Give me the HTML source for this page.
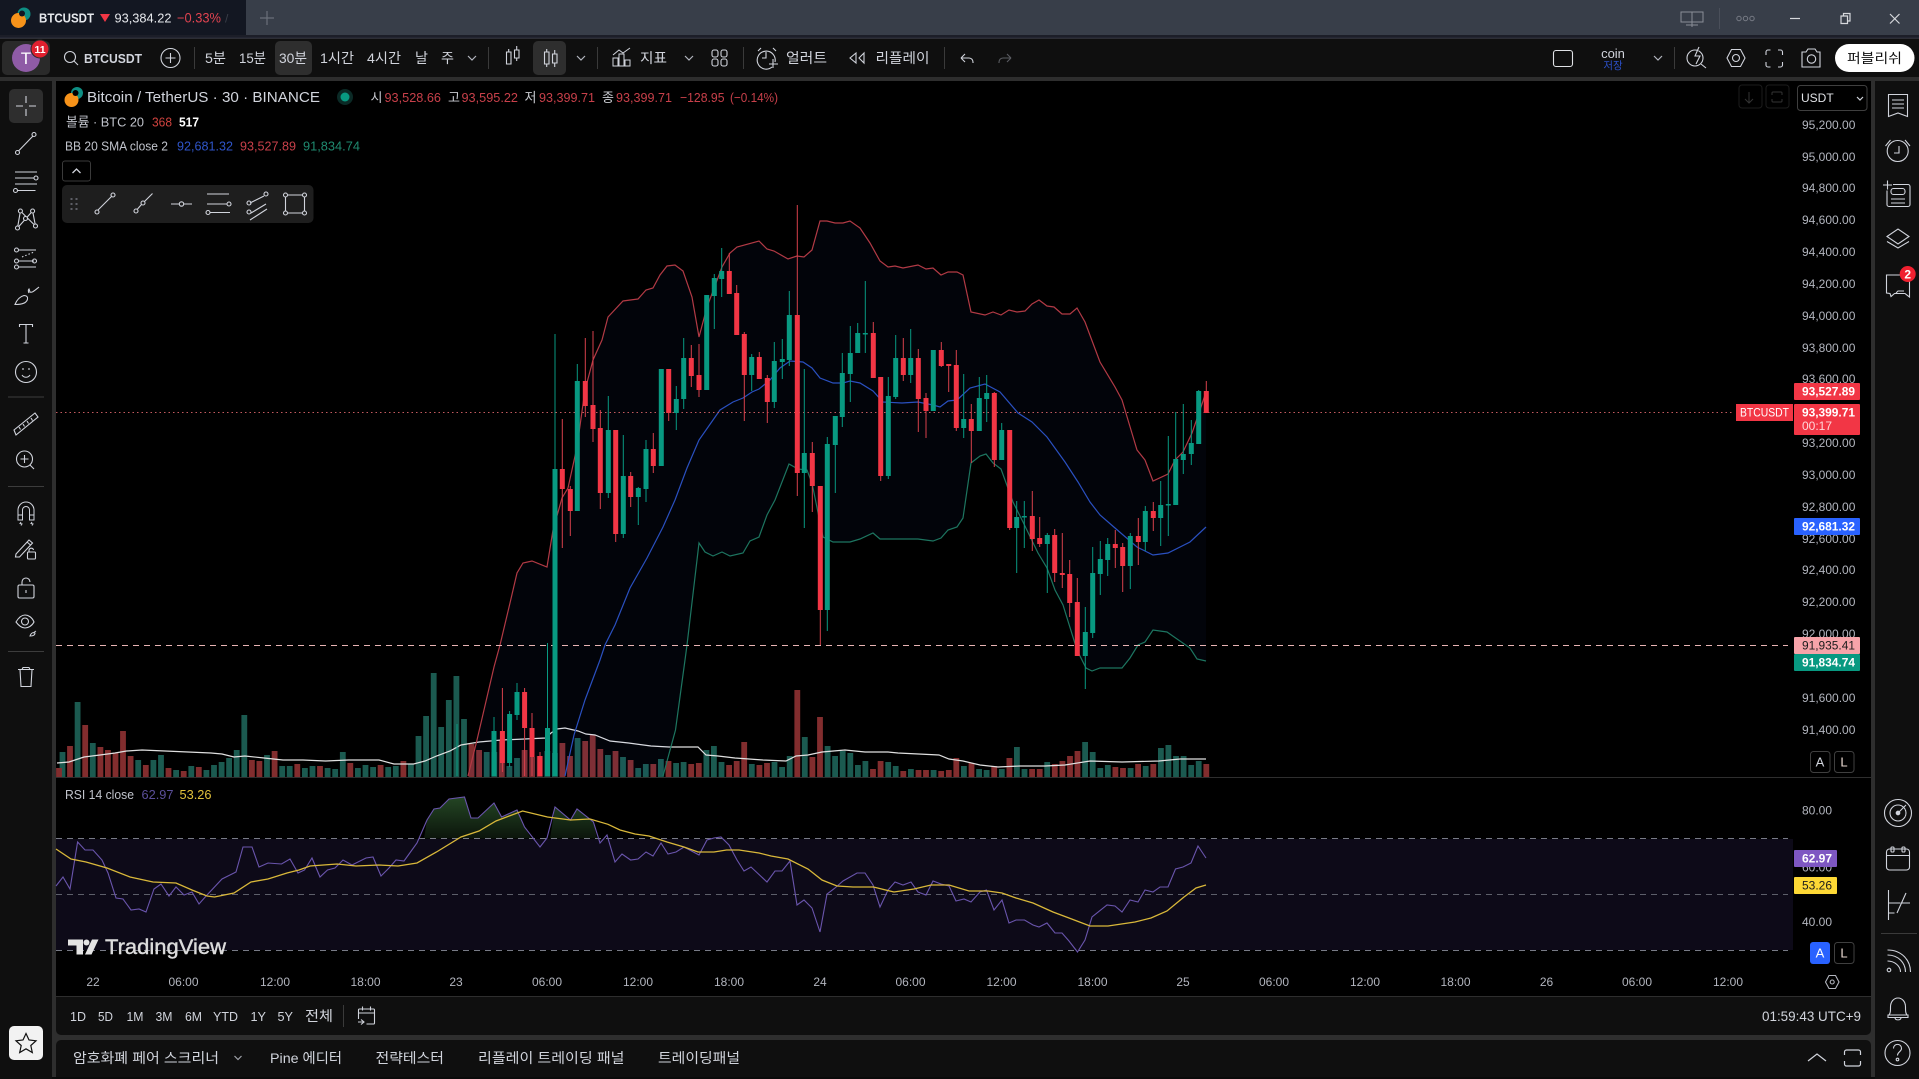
<!DOCTYPE html>
<html><head><meta charset="utf-8"><title>BTCUSDT</title>
<style>
html,body{margin:0;padding:0;background:#000;width:1919px;height:1079px;overflow:hidden}
svg{display:block;font-family:"Liberation Sans","Noto Sans CJK KR",sans-serif}
.i{fill:none;stroke:#d1d4dc;stroke-width:1.1}
.t{fill:#d1d4dc;font-size:14px}
.a{fill:#b2b5be;font-size:12px}
.m{text-anchor:middle}
.l{fill:#c0c3cb;font-size:13px}
</style></head><body>
<svg width="1919" height="1079" viewBox="0 0 1919 1079" xmlns="http://www.w3.org/2000/svg">
<defs><linearGradient id="og" x1="0" y1="797" x2="0" y2="839" gradientUnits="userSpaceOnUse"><stop offset="0" stop-color="#244624"/><stop offset="1" stop-color="#0b140b"/></linearGradient></defs>
<rect width="1919" height="1079" fill="#2e2e2e"/>
<!-- title bar -->
<rect width="1919" height="35" fill="#383e49"/>
<rect y="35" width="1919" height="3" fill="#1c1e28"/><rect y="37.5" width="1919" height="1" fill="#2c2f3c"/>
<path d="M0 0H246V35H0z" fill="#131722"/>
<circle cx="24" cy="14" r="6.5" fill="#0e8f84"/><circle cx="18.5" cy="20.5" r="7.5" fill="#f7931a"/><circle cx="22" cy="13.5" r="3" fill="#131722"/>
<text x="39" y="22.5" font-size="13" font-weight="700" fill="#e6e8ec" textLength="55" lengthAdjust="spacingAndGlyphs">BTCUSDT</text>
<path d="M100 14h10l-5 8z" fill="#f23645"/>
<text x="114.5" y="22.5" font-size="13" fill="#e6e8ec" textLength="57" lengthAdjust="spacingAndGlyphs">93,384.22</text>
<text x="177" y="22.5" font-size="13.5" fill="#e04350" textLength="44" lengthAdjust="spacingAndGlyphs">−0.33%</text>
<text x="225" y="22.5" font-size="12" fill="#3a3e48">/</text>
<path d="M267 11v14M260 18h14" stroke="#6a6f7a" stroke-width="1.2" fill="none"/>
<g class="i" style="stroke:#8a8e98"><path d="M1681 12h22v10h-22zM1692 12v15M1686 25h12" stroke-width="1"/></g>
<path d="M1719.5 8v21" stroke="#4a4f5a"/>
<g fill="none" stroke="#777b85"><circle cx="1739" cy="18.5" r="2.2"/><circle cx="1745.5" cy="18.5" r="2.2"/><circle cx="1752" cy="18.5" r="2.2"/></g>
<path d="M1790 18.5h10" stroke="#d6d8dc" stroke-width="1.2"/>
<path d="M1841 16h6.5v7.5H1841zM1843.5 16v-2.5h6.5v7.5h-2.500" fill="none" stroke="#d6d8dc" stroke-width="1.2"/>
<path d="M1890 14l9.5 9.5M1899.5 14l-9.5 9.5" stroke="#d6d8dc" stroke-width="1.2"/>
<!-- top toolbar -->
<rect y="39" width="1919" height="38" fill="#0f0f0f"/>
<rect x="2" y="41" width="48" height="34" rx="5" fill="#2a2a2a"/>
<circle cx="26" cy="58" r="14" fill="#8f5ba6"/>
<text x="26" y="64" class="m" font-size="17" fill="#fff">T</text>
<circle cx="40" cy="49" r="9.5" fill="#2a2a2a"/><circle cx="40" cy="49" r="8.5" fill="#e0202f"/>
<text x="40" y="53" class="m" font-size="10.5" fill="#fff" font-weight="700">11</text>
<g class="i"><circle cx="70" cy="57" r="5.5"/><path d="M74 61l4 4"/></g>
<text x="84" y="63" font-size="13" font-weight="700" fill="#d1d4dc" textLength="58" lengthAdjust="spacingAndGlyphs">BTCUSDT</text>
<g class="i"><circle cx="170.5" cy="58" r="9.5"/><path d="M170.5 53v10M165.5 58h10"/></g>
<path d="M194.5 47v22M488.5 47v22M597.5 47v22M743.5 47v22M944.5 47v22M1674.5 47v22" stroke="#3a3a3a"/>
<rect x="275" y="41" width="37" height="34" rx="5" fill="#2e2e2e"/>
<rect x="533" y="41" width="33" height="34" rx="5" fill="#2e2e2e"/>
<text x="205" y="63" class="t" textLength="21" lengthAdjust="spacingAndGlyphs">5분</text>
<text x="239" y="63" class="t" textLength="27" lengthAdjust="spacingAndGlyphs">15분</text>
<text x="279" y="63" class="t" textLength="28" lengthAdjust="spacingAndGlyphs">30분</text>
<text x="320" y="63" class="t" textLength="34" lengthAdjust="spacingAndGlyphs">1시간</text>
<text x="367" y="63" class="t" textLength="34" lengthAdjust="spacingAndGlyphs">4시간</text>
<text x="415" y="63" class="t" textLength="13" lengthAdjust="spacingAndGlyphs">날</text>
<text x="441" y="63" class="t" textLength="13" lengthAdjust="spacingAndGlyphs">주</text>
<g fill="none" stroke="#b2b5be" stroke-width="1.2"><path d="M468 56l4 4 4-4M577 56l4 4 4-4M685 56l4 4 4-4M1654 56l4 4 4-4"/></g>
<g class="i"><path d="M506.500 52h4.500v12h-4.500zM508.700 49v3M514.500 50h4.500v8h-4.500zM516.700 46v4M516.700 58v3"/></g>
<g class="i"><path d="M544.500 52h4.500v12h-4.500zM546.700 49v3M546.700 64v3M552.500 54h4.500v9h-4.500zM554.700 50v4M554.700 63v4"/></g>
<g class="i"><path d="M613 66h5v-8h-5zM619 66h5v-12h-5zM625 66h5v-6h-5zM613 55l6-5 4 3 7-5" stroke-width="1"/></g>
<text x="640" y="63" class="t" textLength="27" lengthAdjust="spacingAndGlyphs">지표</text>
<g class="i"><rect x="712" y="50" width="6" height="7" rx="2"/><rect x="721" y="50" width="6" height="7" rx="2"/><rect x="712" y="59" width="6" height="7" rx="2"/><rect x="721" y="59" width="6" height="7" rx="2"/></g>
<g class="i"><path d="M772 67a9 9 0 1 1 3-5M766 52v6h-4M758 51l3-3M773 48l3 3M773 59v9M769 64h9"/></g>
<text x="786" y="63" class="t" textLength="41" lengthAdjust="spacingAndGlyphs">얼러트</text>
<g class="i"><path d="M856 53l-6 5 6 5zM864 53l-5 5 5 5v-10z"/></g>
<text x="875.5" y="63" class="t" textLength="54" lengthAdjust="spacingAndGlyphs">리플레이</text>
<g class="i"><path d="M961 58l4-4M961 58l4 4M961 58h8a4 4 0 0 1 4 4v1"/></g>
<g class="i" style="stroke:#5a5c62"><path d="M1011 58l-4-4M1011 58l-4 4M1011 58h-8a4 4 0 0 0-4 4v1"/></g>
<rect x="1553.5" y="50.5" width="19" height="16" rx="2.5" class="i" style="stroke:#e0e2e6"/>
<text x="1613" y="58" class="m" font-size="13" fill="#d1d4dc">coin</text>
<text x="1613" y="69" class="m" font-size="10.5" fill="#2c50c8">저장</text>
<g class="i"><circle cx="1695" cy="58" r="8"/><path d="M1701 64l5 4M1699 47l-4 9h5l-4 8" style="fill:#0f0f0f"/></g>
<g class="i"><path d="M1727 58l4.500-8.500h9l4.500 8.500-4.500 8.500h-9z"/><circle cx="1736" cy="58" r="3.500"/></g>
<g class="i"><path d="M1766 55v-3a2 2 0 0 1 2-2h2.500M1778 50h2.500a2 2 0 0 1 2 2v3M1782.500 62v3a2 2 0 0 1-2 2h-2.500M1770.500 67h-2.500a2 2 0 0 1-2-2v-3"/></g>
<g class="i"><path d="M1802 52h4l2-3h7l2 3h3v15h-18z"/><circle cx="1811.500" cy="59" r="4.200"/></g>
<rect x="1835" y="44" width="79.5" height="28" rx="14" fill="#fff"/>
<text x="1847" y="63" font-size="13.5" fill="#111" textLength="55" lengthAdjust="spacingAndGlyphs">퍼블리쉬</text>
<!-- left bar -->
<rect y="81" width="52" height="998" fill="#0f0f0f"/>
<rect x="9" y="89" width="34" height="34" rx="5" fill="#2e2e2e"/>
<path d="M26 96v7M26 109v7M16 106h7M29 106h7" stroke="#d1d4dc" fill="none" stroke-width="1.1"/>
<g class="i">
<path d="M18.500 151l14.500-15"/><circle cx="17.500" cy="152.500" r="2"/><circle cx="34" cy="134.500" r="2"/>
<path d="M15 172h22M15 178h19M15 184h22M17.500 190.500h18"/><circle cx="36" cy="178" r="2"/><circle cx="15.500" cy="190.500" r="2"/>
<path d="M17.500 228L20.400 211 35.500 226 32.600 211 17.500 228"/><circle cx="17.500" cy="228" r="2" style="fill:#0f0f0f"/><circle cx="20.400" cy="211" r="2" style="fill:#0f0f0f"/><circle cx="32.600" cy="211" r="2" style="fill:#0f0f0f"/><circle cx="35.500" cy="226" r="2" style="fill:#0f0f0f"/><circle cx="25.500" cy="218.500" r="2" style="fill:#0f0f0f"/>
<path d="M18 250h18M18 261h16M18 267h18"/><circle cx="16.500" cy="250" r="2"/><circle cx="16.500" cy="261" r="2"/><circle cx="16.500" cy="267" r="2"/><circle cx="34.500" cy="261" r="2"/><path d="M22 257l12-5" stroke-dasharray="1.500 2"/>
<path d="M15 304.500c2-5 5-8 9-9 3 0 4 2 3.500 3.500-.5 3-3 5.500-12.500 5.500zM29 293c-1-2-1-3 0-4l1 3c2 1 4-1 9-5"/>
<path d="M19.500 327v-2.500h13v2.500M26 325v18M23.500 343h5"/>
<circle cx="26" cy="372" r="10.500"/><path d="M22 375c2 3 6 3 8 0M23 368v2M29 368v2"/>
<path d="M14 430l21-17 3 4-22 18zM19 427l1.500 2.500M23 424l1.500 2.500M27 421l1.500 2.500M31 418l1.500 2.500"/>
<circle cx="24.500" cy="459" r="8"/><path d="M24.500 455v8M20.500 459h8M30 465l4 4"/>
<path d="M18 520v-10a8 8 0 0 1 16 0v10h-4.500v-10a3.500 3.500 0 0 0-7 0v10zM18 515h4.500M29.500 515h4.500M21 522l-1 1.500 2 .5-1 1.500M32 522l-1 1.500 2 .5-1 1.500" stroke-width="1"/>
<path d="M16 554l13-14 3.500 3-13 14h-4zM27 542l3.500 3"/><rect x="27.500" y="552" width="8" height="7" rx="1"/><path d="M29 552v-2a2.300 2.300 0 0 1 4.500 0"/>
<rect x="18" y="585" width="16" height="13" rx="1.500"/><path d="M22 585v-3a4 4 0 0 1 8 0M26 590v3"/>
<path d="M16 622c3-5 6-7 9-7s7 2 9 7c-2 4-6 6-9 6s-6-2-9-6z"/><circle cx="25" cy="621.500" r="3.500"/><path d="M30 636c1-3 3-4 5-3 0 2-2 3-5 3zM33 633l3-2" stroke-width="1"/>
<path d="M18 669.500h16M22 669.500l1-2h6l1 2M20 669.500l1 17h10l1-17"/>
</g>
<path d="M8 397h36M8 486.500h36M8 651.500h36" stroke="#3c3c3c"/>
<rect x="9" y="1026" width="34" height="34" rx="5" fill="#f2f2f2"/>
<path d="M26 1033.500l3 6.500 7 .8-5.200 4.700 1.500 7-6.300-3.700-6.300 3.700 1.500-7-5.200-4.700 7-.8z" fill="none" stroke="#111" stroke-width="1.2"/>
<!-- chart -->
<rect x="56" y="81" width="1815" height="915" fill="#000"/>
<!-- volume -->
<path stroke="#1b5a50" stroke-width="5.8" fill="none" d="M62.500 752V777M77.600 702V777M92.800 743V777M138.200 760V777M153.400 760V777M161 755V777M176.100 770V777M191.300 766V777M206.400 770V777M214 765V777M221.600 762V777M229.100 758V777M236.700 750V777M244.300 715V777M267 755V777M282.200 766V777M289.700 766V777M304.900 768V777M312.500 766V777M327.600 768V777M335.200 769V777M342.800 752V777M357.900 768V777M365.500 765V777M373.100 767V777M388.200 767V777M395.800 766V777M410.900 764V777M418.500 736V777M426.100 716V777M433.700 673V777M441.200 727V777M448.800 700V777M456.400 676V777M464 719V777M486.700 752V777M494.300 752V777M509.400 766V777M517 758V777M547.300 751V777M554.900 753V777M577.600 738V777M607.900 755V777M623 757V777M638.200 768V777M645.800 764V777M660.900 759V777M676.100 763V777M683.600 762V777M706.400 750V777M713.900 746V777M721.500 762V777M751.800 764V777M774.500 762V777M782.100 767V777M789.700 756V777M804.800 737V777M827.600 746V777M835.100 756V777M842.700 751V777M850.300 753V777M857.900 765V777M865.400 761V777M888.200 762V777M895.700 766V777M910.900 769V777M933.600 770V777M963.900 766V777M979.100 769V777M986.600 770V777M1001.800 769V777M1016.900 747V777M1024.500 769V777M1047.200 762V777M1085.100 742V777M1092.700 752V777M1100.300 768V777M1107.800 765V777M1130.600 768V777M1145.700 766V777M1160.900 748V777M1168.400 745V777M1176 756V777M1183.600 756V777M1191.200 765V777M1198.700 761V777"/>
<path stroke="#822d2e" stroke-width="5.8" fill="none" d="M59 768V777M70 746V777M85.200 725V777M100.400 747V777M107.900 750V777M115.500 753V777M123 731V777M130.600 756V777M145.800 765V777M168.500 768V777M183.700 771V777M198.800 767V777M251.900 760V777M259.400 761V777M274.600 751V777M297.300 764V777M320 766V777M350.300 763V777M380.600 765V777M403.400 761V777M471.500 744V777M479.100 750V777M501.800 740V777M524.600 750V777M532.100 757V777M539.700 756V777M562.400 743V777M570 756V777M585.200 741V777M592.700 735V777M600.300 749V777M615.500 751V777M630.600 760V777M653.300 764V777M668.500 761V777M691.200 764V777M698.800 763V777M729.100 765V777M736.700 761V777M744.200 742V777M759.400 765V777M767 763V777M797.300 690V777M812.400 757V777M820 717V777M873 769V777M880.600 761V777M903.300 771V777M918.500 770V777M926 770V777M941.200 771V777M948.800 770V777M956.300 758V777M971.500 763V777M994.200 766V777M1009.400 758V777M1032.100 769V777M1039.700 769V777M1054.800 764V777M1062.400 761V777M1070 756V777M1077.500 751V777M1115.400 767V777M1123 768V777M1138.100 764V777M1153.300 764V777M1206.300 764V777"/>
<polyline fill="none" stroke="#e0e0e0" stroke-width="1.200" points="57,763 69,762 84,757 100,755 115,753 126.500,751 142,750 165,751 188,752 211,753 222,754 234,757 245,756 264,758 283,760 303,760 325.500,761 348.500,760 379,760 394,764 413.600,764 425,761 436.500,756 450,751 461,745 479,742 501.600,740 524.600,739 545.600,738 551,733 557,729 565,728 578,731 586,734 595,735 610,741 628.600,743 651,746 669,747 698,747 706,755 718,756 735,758 763,760 786,761 796,756 808,755 822,752 845,750 865,752 888,752 898,753 939,755 949,759 963,761 980,765 998,767 1020,766 1045,766 1065,765 1090,761 1122,762 1159,761 1180,759 1206,759"/>
<!-- BB fill -->
<polygon fill="#2962ff" fill-opacity="0.04" points="468,776 477,740 494,667 500,645 510,603 517,573 523,563 532,561 547,567 553,530 562,498 568,488 577,447 585,390 593,360 602,340 608,317 623,301 638,299 646,290 653,288 660,275 667,266 675,265 683,271 692,297 699,337 707,307 722,267 730,253 737,247 759,241 767,249 774,251 788,259 797,256 804,257 812,250 820,221 827,221 835,223 843,223 850,221 860,228 870,243 880,261 888,267 895,266 903,268 918,265 926,269 933,268 941,275 948,272 957,272 963,275 971,312 985,315 993,312 1001,315 1009,310 1017,312 1025,311 1032,304 1039,300 1047,306 1054,307 1062,314 1070,314 1077,308 1085,322 1100,362 1115,387 1122,400 1137,450 1145,460 1153,481 1168,474 1175,460 1183,452 1192,433 1199,413 1206,392 1206,661 1197,659 1190,648 1167,632 1153,630 1145,642 1138,645 1130,658 1122,668 1100,668 1092,671 1086,668 1077,650 1063,605 1055,590 1047,568 1038,553 1023,522 1013,502 1001,469 993,463 986,454 980,456 971,463 963,518 957,527 948,530 941,538 933,541 918,539 880,539 873,533 860,539 850,542 833,542 823,537 812,483 807,470 798,469 789,464 775,500 767,515 759,537 750,541 743,553 730,556 722,552 713,556 705,552 699,543 687,645 685,660 675.500,730 663,776"/>
<!-- BB lines -->
<polyline fill="none" stroke="#b23a45" stroke-width="1.200" points="468,776 477,740 494,667 500,645 510,603 517,573 523,563 532,561 547,567 553,530 562,498 568,488 577,447 585,390 593,360 602,340 608,317 623,301 638,299 646,290 653,288 660,275 667,266 675,265 683,271 692,297 699,337 707,307 722,267 730,253 737,247 759,241 767,249 774,251 788,259 797,256 804,257 812,250 820,221 827,221 835,223 843,223 850,221 860,228 870,243 880,261 888,267 895,266 903,268 918,265 926,269 933,268 941,275 948,272 957,272 963,275 971,312 985,315 993,312 1001,315 1009,310 1017,312 1025,311 1032,304 1039,300 1047,306 1054,307 1062,314 1070,314 1077,308 1085,322 1100,362 1115,387 1122,400 1137,450 1145,460 1153,481 1168,474 1175,460 1183,452 1192,433 1199,413 1206,392"/>
<polyline fill="none" stroke="#2a50c0" stroke-width="1.200" points="565,776 574,735 585,700 600,660 605,645 615,625 630,588 647,558 663,527 675,500 687,468 699,440 720,410 733,402 743,398 752,392 759,389 770,380 780,368 790,361 803,362 812,368 820,378 833,383 843,383 850,381 860,383 873,391 883,402 902,403 918,402 933,405 940,407 948,401 957,400 970,388 985,384 1000,392 1018,413 1032,422 1047,437 1065,462 1078,482 1090,502 1100,515 1115,528 1137,547 1153,555 1168,553 1190,542 1206,527"/>
<polyline fill="none" stroke="#1d7560" stroke-width="1.200" points="663,776 675.500,730 685,660 687,645 699,543 705,552 713,556 722,552 730,556 743,553 750,541 759,537 767,515 775,500 789,464 798,469 807,470 812,483 823,537 833,542 850,542 860,539 873,533 880,539 918,539 933,541 941,538 948,530 957,527 963,518 971,463 980,456 986,454 993,463 1001,469 1013,502 1023,522 1038,553 1047,568 1055,590 1063,605 1077,650 1086,668 1092,671 1100,668 1122,668 1130,658 1138,645 1145,642 1153,630 1167,632 1190,648 1197,659 1206,661"/>
<!-- price lines -->
<path d="M56 412.500H1733" stroke="#c45a5f" stroke-width="1" stroke-dasharray="1.500 3" fill="none"/>
<path d="M56 645.500H1788" stroke="#e8b4b4" stroke-width="1" stroke-dasharray="6 5" fill="none"/>
<!-- candles wicks -->
<path fill="none" stroke="#089981" stroke-width="1" d="M457 724V776M494 717V776M509.600 711V767M517 683V720M547.500 643V776M555 334V776M577.300 364V511M608.300 396V498M623.300 435V538M638.300 487V525M646 440V502M661.300 369V466M676.300 386V430M683.700 338V409M706.700 295V390M714.300 274V329M721.700 248V297M751.700 354V391M774.300 342V408M782.300 339V379M789.300 291V366M804.300 369V528M827.300 437V631M835.300 416V493M842.300 353V427M850.300 326V402M857.700 323V353M865.300 281V353M888.300 377V479M895.700 335V399M910.700 329V383M933.300 350V411M963.700 374V438M979.300 377V431M986.700 375V422M1001.700 423V460M1016.700 501V573M1024.300 501V548M1047.300 533V593M1085.300 607V689M1092.700 547V638M1100.300 541V595M1107.700 538V576M1130.300 533V589M1145.300 506V551M1160.700 481V546M1168.300 436V536M1175.700 412V505M1183.300 404V474M1191.300 420V465M1198.700 390V444"/>
<path fill="none" stroke="#d8404c" stroke-width="1" d="M502.400 688V772M524.600 688V776M532 713V776M540 752V776M562.300 419V548M570.300 486V536M585.300 338V417M593 331V442M600.300 410V509M615.700 430V542M630.700 472V507M653.300 433V473M668.700 369V421M691.300 345V387M699 344V397M729.300 253V294M736.700 285V335M744.300 332V421M759.300 352V379M767.300 375V423M797.300 205V496M812.300 442V512M820.300 486V645M873.300 322V378M880.700 377V481M903.300 338V381M918.300 349V432M926 393V438M941.300 342V367M948.700 364V392M956.300 350V431M971.300 404V463M994.300 392V467M1009.700 430V530M1032.300 491V551M1039.700 517V547M1054.700 529V582M1062.300 533V588M1069.700 560V617M1077.300 578V656M1115.300 530V568M1122.700 543V592M1138.300 518V565M1153.300 502V531M1206.300 381V413"/>
<path fill="none" stroke="#089981" stroke-width="5" d="M494 731V776M509.600 714V763M517 692V715M547.500 728V776M555 469V776M577.300 381V511M608.300 430V493M623.300 476V534M638.300 488V497M646 449V489M661.300 369V466M676.300 399V413M683.700 358V399M706.700 295V390M714.300 278V296M721.700 271V279M751.700 357V375M774.300 361V402M782.300 359V362M789.300 315V360M804.300 453V473M827.300 444V610M835.300 416V445M842.300 373V417M850.300 353V374M857.700 333V353M865.300 333V334.500M888.300 396V476M895.700 358V397M910.700 358V375M933.300 350V411M963.700 419V428M979.300 398V431M986.700 393V399M1001.700 430V460M1016.700 517V528M1024.300 516V517.500M1047.300 535V544M1085.300 632V656M1092.700 573V633M1100.300 559V574M1107.700 544V560M1130.300 536V566M1145.300 511V542M1160.700 505V518M1168.300 504V505.500M1175.700 459V505M1183.300 454V460M1191.300 443V454M1198.700 391V444"/>
<path fill="none" stroke="#f23645" stroke-width="5" d="M502.400 731V763M524.600 692V728M532 728V757M540 756V776M562.300 469V489M570.300 489V511M585.300 381V406M593 405V429M600.300 428V493M615.700 430V534M630.700 476V497M653.300 449V466M668.700 369V413M691.300 358V376M699 375V390M729.300 271V294M736.700 293V335M744.300 334V375M759.300 357V379M767.300 378V402M797.300 315V473M812.300 453V486M820.300 486V610M873.300 333V378M880.700 377V476M903.300 358V375M918.300 358V399M926 398V411M941.300 350V366M948.700 364V366M956.300 365V428M971.300 419V431M994.300 393V460M1009.700 430V528M1032.300 516V539M1039.700 538V544M1054.700 535V573M1062.300 573V575M1069.700 574V603M1077.300 602V656M1115.300 544V548M1122.700 547V566M1138.300 536V542M1153.300 511V518M1206.300 391V413"/>
<!-- pane sep -->
<path d="M56 777.500H1871" stroke="#2e2e2e"/>
<!-- RSI -->
<rect x="56" y="839" width="1737" height="111" fill="#0d0a18"/>
<path d="M424 838.500L427 820 434 809 440 808 449 799 464.500 797 471 818 478 818 494 803 501.600 817 517 810 524.500 827 531 838.500zM550 838.500L555 807 570.500 820 577 809 593.400 822 597 838.500z" fill="url(#og)"/>
<path d="M56 838.500H1788M56 950.500H1788" stroke="#787b86" stroke-width="1" stroke-dasharray="6 5" fill="none"/>
<path d="M56 894.500H1788" stroke="#5d5f6a" stroke-width="1" stroke-dasharray="6 5" fill="none"/>
<polyline fill="none" stroke="#6a55ad" stroke-width="1.100" points="56,886 63,877 70,889 77.600,842 85,850 93,850 102,860 108,873 116,898 123,899 131,910 139,909 146,912 154,889 161,884 169,896 176,887 184,895 192,892 199,904 207,895 222,879 236,872 243,847 252,847 259,867 268,863 281.500,864 290,859 298,873 304.500,870 312,858 320,877 327.500,870 335,868 343,860 352,865 366,858 373,857 381,876 389,868 396,860 404,861 417,843 427,820 434,809 440,808 449,799 464.500,797 471,818 478,818 494,803 501.600,817 517,810 524.500,827 540,847 547,838 555,807 570.500,820 577,809 593.400,822 600,843 607,835 615,862 622,854 630.600,860 638,859 646,852 653,856 661,843 668,854 676,852 684,847 699,855 707,840 714,838 721,837 729,845 737,860 744,871 751,867 767,882 775,871 782,871 790,861 797,905 804,900 812,908 820,932 827,894 835,888 843,881 857,873 865,873 873,885 880,907 888,890 895,882 903,885 911,882 918,892 926,895 933,881 941,884 949,886 956,901 964,899 971,902 980,892 986.500,890 994,910 1002,900 1009,923 1016,920 1024.500,920 1033,925 1039,927 1047,923 1055,933 1062,933 1069,941 1077.500,952 1085,940 1092,917 1107,905 1115,906 1122,912 1130,900 1138,902 1145,890 1153,892 1160,887 1168,887 1175.500,869 1183,867 1191,863 1198,846 1206,858"/>
<polyline fill="none" stroke="#d9b83a" stroke-width="1.300" points="56,849 71,859 86,862 107,868 130,877 153,882 176,883 192,890 207,896 214.500,897 234,893 251,882 268,879 287,873 299,870 310,866 337,864 356,866 379,865 398,866 417,863 436.500,852 461,837 479,831 496,821 522.600,811 547.500,817 570.500,820 590,819 608,824.300 620,830 635,834 649,836 667,842 684,847 698,852 714,852 726.500,850 739,850 759,853 771,856 788,859 808,869 822,880 837,886 853,887 873.500,887 894,892 914,889 931,885 949,885 969,891 988,891 1002,893 1016,898 1033,903 1053,912 1069,918 1090,926 1108,926 1135,922 1151,918 1167,911 1184,897 1196,888 1206,885"/>
<!-- watermark -->
<path d="M68 939.500h15v15h-6.500v-9H68z" fill="#e4e4e4"/><circle cx="86.500" cy="942.500" r="3" fill="#e4e4e4"/><path d="M92 939.500h6.500l-7 15H85z" fill="#e4e4e4"/>
<text x="105" y="954" font-size="21" font-weight="400" stroke="#dcdcdc" stroke-width=".4" fill="#dcdcdc" textLength="121" lengthAdjust="spacingAndGlyphs">TradingView</text>
<!-- legend -->
<circle cx="77" cy="93" r="6" fill="#0e8f84"/><circle cx="71.500" cy="100" r="7" fill="#f7931a"/><circle cx="75.500" cy="93" r="3" fill="#000"/>
<text x="87" y="102" font-size="14.5" fill="#d1d4dc" textLength="233" lengthAdjust="spacingAndGlyphs">Bitcoin / TetherUS · 30 · BINANCE</text>
<circle cx="345" cy="97" r="8" fill="#0b2a26"/><circle cx="345" cy="97" r="4.500" fill="#089981"/>
<g font-size="13">
<text x="370.500" y="102" fill="#c8cad0">시</text><text x="384.500" y="102" fill="#c8404a" textLength="56.500" lengthAdjust="spacingAndGlyphs">93,528.66</text>
<text x="448" y="102" fill="#c8cad0">고</text><text x="461.500" y="102" fill="#c8404a" textLength="56.500" lengthAdjust="spacingAndGlyphs">93,595.22</text>
<text x="524.500" y="102" fill="#c8cad0">저</text><text x="539" y="102" fill="#c8404a" textLength="56" lengthAdjust="spacingAndGlyphs">93,399.71</text>
<text x="602" y="102" fill="#c8cad0">종</text><text x="616" y="102" fill="#c8404a" textLength="56" lengthAdjust="spacingAndGlyphs">93,399.71</text>
<text x="680" y="102" fill="#c8404a" textLength="44.500" lengthAdjust="spacingAndGlyphs">−128.95</text><text x="730" y="102" fill="#c8404a" textLength="48" lengthAdjust="spacingAndGlyphs">(−0.14%)</text>
</g>
<text x="66" y="126.500" class="l" textLength="78" lengthAdjust="spacingAndGlyphs">볼륨 · BTC 20</text>
<text x="152" y="126.500" font-size="13" fill="#d0433f" textLength="20" lengthAdjust="spacingAndGlyphs">368</text>
<text x="179" y="126.500" font-size="13" fill="#fff" font-weight="700" textLength="20" lengthAdjust="spacingAndGlyphs">517</text>
<text x="65" y="150.500" class="l" textLength="103" lengthAdjust="spacingAndGlyphs">BB 20 SMA close 2</text>
<text x="177" y="150.500" font-size="13" fill="#2f55c9" textLength="56" lengthAdjust="spacingAndGlyphs">92,681.32</text>
<text x="240" y="150.500" font-size="13" fill="#c8404a" textLength="56" lengthAdjust="spacingAndGlyphs">93,527.89</text>
<text x="303" y="150.500" font-size="13" fill="#1f8a70" textLength="57" lengthAdjust="spacingAndGlyphs">91,834.74</text>
<rect x="62.500" y="161" width="28" height="20" rx="2.500" fill="#000" stroke="#3a3a3a"/>
<path d="M72.500 173l4-4 4 4" fill="none" stroke="#d1d4dc" stroke-width="1.300"/>
<rect x="62" y="185" width="251.500" height="38" rx="5" fill="#1e1e1e"/>
<g fill="#5d5f66"><rect x="70.500" y="198" width="2" height="2"/><rect x="75.500" y="198" width="2" height="2"/><rect x="70.500" y="203" width="2" height="2"/><rect x="75.500" y="203" width="2" height="2"/><rect x="70.500" y="208" width="2" height="2"/><rect x="75.500" y="208" width="2" height="2"/></g>
<g class="i">
<path d="M98 210l14-14"/><circle cx="97" cy="212" r="2"/><circle cx="113" cy="195" r="2"/>
<path d="M137.500 209l4-4.500M144.500 201.500l8-8"/><circle cx="136" cy="211" r="2"/><circle cx="143" cy="203" r="2"/>
<path d="M171 204h8M184 204h8"/><circle cx="181.500" cy="204" r="2.200"/>
<path d="M207 194h22M207 204h20M210 212.500h20"/><circle cx="229" cy="204" r="2"/><circle cx="208" cy="212.500" r="2"/>
<path d="M250 203l14-7M251 213l15-9M250 220l17-11"/><circle cx="249" cy="203" r="2"/><circle cx="266" cy="194" r="2"/><circle cx="249" cy="212" r="2"/>
<path d="M287.500 195h15M287.500 213h15M285.500 197v14M304.500 197v14"/><circle cx="285.500" cy="195" r="2"/><circle cx="304.500" cy="195" r="2"/><circle cx="285.500" cy="213" r="2"/><circle cx="304.500" cy="213" r="2"/>
</g>
<!-- scale buttons -->
<rect x="1739" y="85" width="23" height="23" rx="3" fill="none" stroke="#1c1c1c"/><rect x="1766" y="85" width="23" height="23" rx="3" fill="none" stroke="#1c1c1c"/>
<path d="M1749 92v11M1745 99l4 4 4-4M1772 95v-2a1 1 0 0 1 1-1h8a1 1 0 0 1 1 1v2M1772 99v2a1 1 0 0 0 1 1h8a1 1 0 0 0 1-1v-2" fill="none" stroke="#333"/>
<rect x="1797.500" y="85.500" width="69.500" height="25" rx="3" fill="#000" stroke="#3f3f3f"/>
<text x="1801" y="102" font-size="12" fill="#e0e2e6">USDT</text>
<path d="M1857 97l3 3 3-3" fill="none" stroke="#d1d4dc" stroke-width="1.200"/>
<!-- price axis -->
<g class="a">
<text x="1802" y="129">95,200.00</text><text x="1802" y="161">95,000.00</text><text x="1802" y="192">94,800.00</text><text x="1802" y="224">94,600.00</text><text x="1802" y="256">94,400.00</text><text x="1802" y="288">94,200.00</text><text x="1802" y="320">94,000.00</text><text x="1802" y="352">93,800.00</text><text x="1802" y="383">93,600.00</text><text x="1802" y="447">93,200.00</text><text x="1802" y="479">93,000.00</text><text x="1802" y="511">92,800.00</text><text x="1802" y="543">92,600.00</text><text x="1802" y="574">92,400.00</text><text x="1802" y="606">92,200.00</text><text x="1802" y="638">92,000.00</text><text x="1802" y="702">91,600.00</text><text x="1802" y="734">91,400.00</text>
</g>
<rect x="1794" y="383" width="66" height="17" rx="1" fill="#f23645"/>
<text x="1802" y="395.500" font-size="12" font-weight="700" fill="#fff" textLength="53" lengthAdjust="spacingAndGlyphs">93,527.89</text>
<rect x="1794" y="404" width="66" height="31" rx="1" fill="#f23645"/>
<text x="1802" y="416.500" font-size="12" font-weight="700" fill="#fff" textLength="53" lengthAdjust="spacingAndGlyphs">93,399.71</text>
<text x="1802" y="430" font-size="12" fill="#ffd6d9">00:17</text>
<rect x="1736" y="404" width="57" height="17" fill="#f23645"/>
<text x="1740" y="416.500" font-size="12" fill="#fff" textLength="49" lengthAdjust="spacingAndGlyphs">BTCUSDT</text>
<rect x="1794" y="518" width="66" height="17" rx="1" fill="#2962ff"/>
<text x="1802" y="530.500" font-size="12" font-weight="700" fill="#fff" textLength="53" lengthAdjust="spacingAndGlyphs">92,681.32</text>
<rect x="1794" y="637" width="66" height="17" rx="1" fill="#f7a3a9"/>
<text x="1802" y="649.500" font-size="12" fill="#1c1c1c" textLength="53" lengthAdjust="spacingAndGlyphs">91,935.41</text>
<rect x="1794" y="654" width="66" height="17" rx="1" fill="#089981"/>
<text x="1802" y="666.500" font-size="12" font-weight="700" fill="#fff" textLength="53" lengthAdjust="spacingAndGlyphs">91,834.74</text>
<!-- A L -->
<rect x="1810.500" y="751.500" width="19.500" height="21" rx="3" fill="#000" stroke="#3f3f3f"/><text x="1820" y="766.500" class="m" font-size="13" fill="#d1d4dc">A</text>
<rect x="1834.500" y="751.500" width="19.500" height="21" rx="3" fill="#000" stroke="#3f3f3f"/><text x="1844" y="766.500" class="m" font-size="13" fill="#e8d8d0">L</text>
<text x="1802" y="814.500" class="a">80.00</text><text x="1802" y="871.500" class="a">60.00</text><text x="1802" y="926" class="a">40.00</text>
<rect x="1794" y="850" width="43" height="17" rx="1" fill="#7e57c2"/><text x="1802" y="862.500" font-size="12" font-weight="700" fill="#fff">62.97</text>
<rect x="1794" y="877" width="43" height="17" rx="1" fill="#fdd835"/><text x="1802" y="889.500" font-size="12" fill="#1c1c1c">53.26</text>
<rect x="1810" y="942" width="20" height="22" rx="3" fill="#2962ff"/><text x="1820" y="957.500" class="m" font-size="13" fill="#fff">A</text>
<rect x="1834.500" y="942.500" width="19.500" height="21" rx="3" fill="#000" stroke="#3f3f3f"/><text x="1844" y="957.500" class="m" font-size="13" fill="#e8d8d0">L</text>
<!-- legend RSI -->
<text x="65" y="799" class="l" textLength="69" lengthAdjust="spacingAndGlyphs">RSI 14 close</text>
<text x="141.500" y="799" font-size="13" fill="#5b4f9a" textLength="32" lengthAdjust="spacingAndGlyphs">62.97</text>
<text x="179.500" y="799" font-size="13" fill="#e2c23c" textLength="32" lengthAdjust="spacingAndGlyphs">53.26</text>
<!-- time axis -->
<g class="a m">
<text x="93" y="986">22</text><text x="183.500" y="986">06:00</text><text x="275" y="986">12:00</text><text x="365.500" y="986">18:00</text><text x="456" y="986">23</text><text x="547" y="986">06:00</text><text x="638" y="986">12:00</text><text x="729" y="986">18:00</text><text x="820" y="986">24</text><text x="910.500" y="986">06:00</text><text x="1001.500" y="986">12:00</text><text x="1092.500" y="986">18:00</text><text x="1183" y="986">25</text><text x="1274" y="986">06:00</text><text x="1365" y="986">12:00</text><text x="1455.500" y="986">18:00</text><text x="1546.500" y="986">26</text><text x="1637" y="986">06:00</text><text x="1728" y="986">12:00</text>
</g>
<g class="i" style="stroke:#b2b5be"><path d="M1825.500 982l3.500-6.500h6.500l3.500 6.500-3.500 6.500H1829z"/><circle cx="1832.200" cy="982" r="2"/></g>
<!-- range bar -->
<path d="M56 996.500H1871" stroke="#2e2e2e"/>
<path d="M56 997H1871V1030a5 5 0 0 1-5 5H61a5 5 0 0 1-5-5z" fill="#0f0f0f"/>
<g font-size="13" fill="#d1d4dc">
<text x="70" y="1021" textLength="16" lengthAdjust="spacingAndGlyphs">1D</text><text x="98" y="1021" textLength="15" lengthAdjust="spacingAndGlyphs">5D</text><text x="126.500" y="1021" textLength="17" lengthAdjust="spacingAndGlyphs">1M</text><text x="155.500" y="1021" textLength="17" lengthAdjust="spacingAndGlyphs">3M</text><text x="185" y="1021" textLength="17" lengthAdjust="spacingAndGlyphs">6M</text><text x="213" y="1021" textLength="25" lengthAdjust="spacingAndGlyphs">YTD</text><text x="250.500" y="1021" textLength="15.500" lengthAdjust="spacingAndGlyphs">1Y</text><text x="277.500" y="1021" textLength="15.500" lengthAdjust="spacingAndGlyphs">5Y</text><text x="305" y="1021" font-size="14" textLength="28" lengthAdjust="spacingAndGlyphs">전체</text>
</g>
<path d="M343.500 1005v22" stroke="#3a3a3a"/>
<g class="i"><path d="M358.500 1019v-9a1 1 0 0 1 1-1h14a1 1 0 0 1 1 1v13a1 1 0 0 1-1 1h-7M358.500 1013h16M362.500 1006.500v4M370.500 1006.500v4M358 1022h6M361 1019.500l3 2.500-3 2.500"/></g>
<text x="1762" y="1021" font-size="14" fill="#d1d4dc" textLength="99" lengthAdjust="spacingAndGlyphs">01:59:43 UTC+9</text>
<!-- bottom panel -->
<path d="M61 1040H1866a5 5 0 0 1 5 5V1077H56V1045a5 5 0 0 1 5-5z" fill="#0f0f0f"/>
<rect x="52" y="1077" width="1823" height="2" fill="#0a0a0a"/>
<g font-size="14" fill="#d1d4dc">
<text x="73" y="1063" textLength="146" lengthAdjust="spacingAndGlyphs">암호화폐 페어 스크리너</text>
<text x="270" y="1063" textLength="72" lengthAdjust="spacingAndGlyphs">Pine 에디터</text>
<text x="375.500" y="1063" textLength="68.500" lengthAdjust="spacingAndGlyphs">전략테스터</text>
<text x="478" y="1063" textLength="146.500" lengthAdjust="spacingAndGlyphs">리플레이 트레이딩 패널</text>
<text x="658" y="1063" textLength="82" lengthAdjust="spacingAndGlyphs">트레이딩패널</text>
</g>
<path d="M234.500 1056l3.500 3.500 3.500-3.500" fill="none" stroke="#a0a3aa" stroke-width="1.200"/>
<path d="M1808 1061l9-7 9 7" fill="none" stroke="#d1d4dc" stroke-width="1.200"/>
<path d="M1844.500 1055v-3a2 2 0 0 1 2-2h12a2 2 0 0 1 2 2v3M1844.500 1061v3a2 2 0 0 0 2 2h12a2 2 0 0 0 2-2v-3" fill="none" stroke="#d1d4dc" stroke-width="1.200"/>
<!-- right bar -->
<rect x="1875" y="81" width="44" height="998" fill="#0f0f0f"/>
<g class="i">
<path d="M1888.500 94.500h19v22l-9.500-3.500-9.500 3.500zM1892 100h12M1892 104h12M1892 108h12"/>
<circle cx="1897.700" cy="151" r="10.500"/><path d="M1899 146v7h-5M1885.500 146l5-6M1910 146l-5-6"/>
<path d="M1893 184.500h15a2 2 0 0 1 2 2v18a2 2 0 0 1-2 2h-19a2 2 0 0 1-2-2v-14M1883 185h9M1887.500 180.500v9"/><rect x="1891" y="188.500" width="14" height="6" rx="2.500"/><path d="M1891 199h14M1891 203h14"/>
<path d="M1887 236.500l11-7.500 11 7.500-11 7.500zM1887 241.500l11 6.500 11-6.500"/>
<path d="M1886.500 275h23v22l-4.500-3.500h-10.500l-3.500 3-1-3-3.500-.5zM1896 293l2-2h6"/>
<circle cx="1898" cy="813" r="13.500"/><circle cx="1898" cy="813" r="8"/><circle cx="1898" cy="813" r="1.800" style="fill:#d1d4dc"/><path d="M1898 813l8-8"/>
<path d="M1886.500 852a3 3 0 0 1 3-3h17a3 3 0 0 1 3 3v15a3 3 0 0 1-3 3h-17a3 3 0 0 1-3-3zM1886.500 855.500h23"/><rect x="1891" y="847" width="3" height="5" rx="1"/><rect x="1902" y="847" width="3" height="5" rx="1"/>
<path d="M1888.500 890v30M1888.500 903h12M1888.500 913h6M1897 913l9-20M1901 903h9"/>
<circle cx="1889" cy="970" r="1.800"/><path d="M1887.500 961c7 0 13 5 13 11M1887.500 955c11 0 18 8 18 17M1887.500 950c14 0 23 10 23 22"/>
<path d="M1889 1015c1.500-2 1.500-4 1.500-8 0-5 3-9 7.500-9s7.500 4 7.500 9c0 4 0 6 1.500 8zM1888 1015h20v2.500h-20zM1895 1018c.5 2.500 5.500 2.500 6 0"/>
<circle cx="1897.500" cy="1053" r="12.500"/><path d="M1893.500 1048.500c0-5.500 8-5.500 8 0 0 3-4 3.500-4 7"/><circle cx="1897.500" cy="1059.500" r="1.300"/>
</g>
<circle cx="1907.700" cy="274" r="8" fill="#f0202f"/><text x="1907.700" y="278.500" class="m" font-size="12" font-weight="700" fill="#fff">2</text>
<path d="M1881 933.500h36" stroke="#3a3a3a"/>
</svg>
</body></html>
